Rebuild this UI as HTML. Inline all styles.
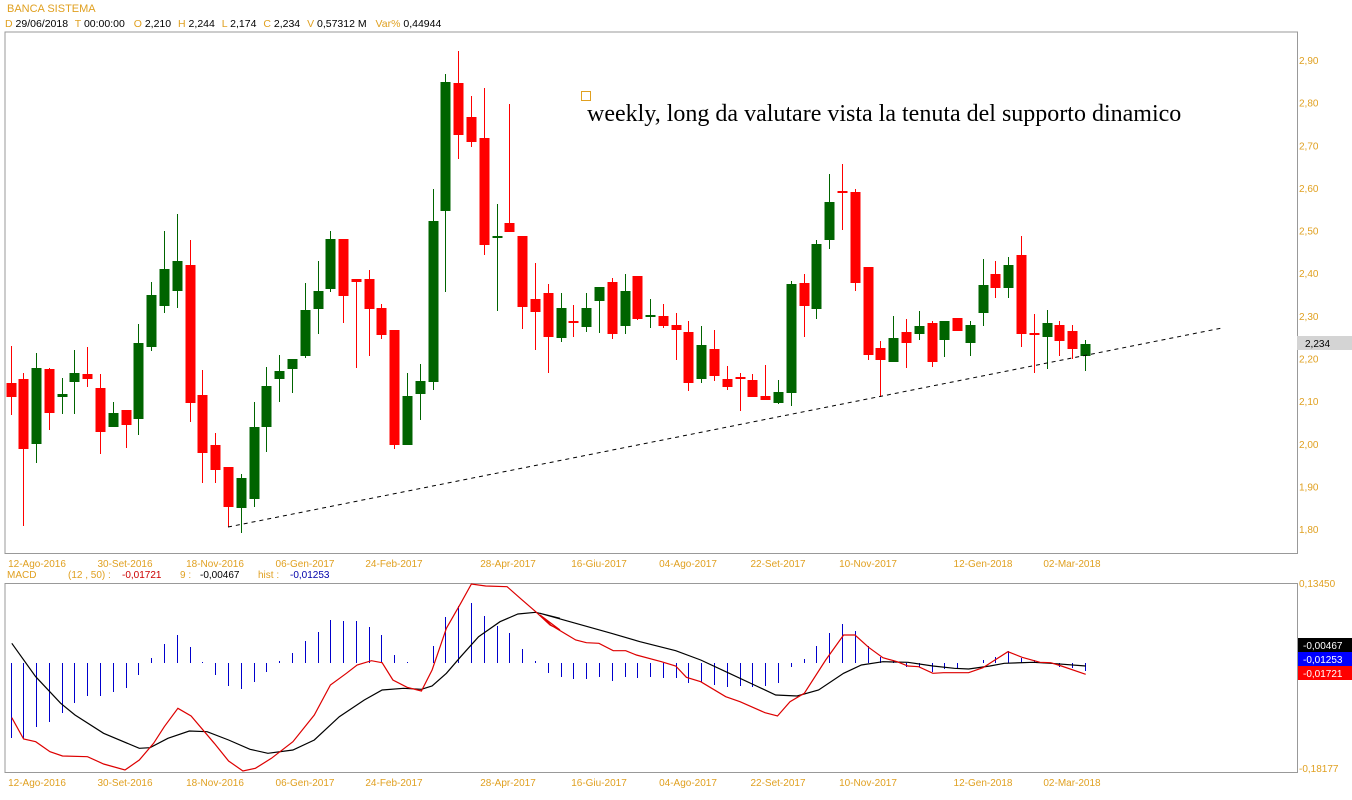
<!DOCTYPE html>
<html><head><meta charset="utf-8">
<style>
html,body{margin:0;padding:0;background:#fff;width:1352px;height:800px;overflow:hidden}
svg{display:block}
text{font-family:"Liberation Sans",Arial,sans-serif}
</style></head><body>
<svg id="s" width="1352" height="800" xmlns="http://www.w3.org/2000/svg">
<rect width="1352" height="800" fill="#fff"/>
<text x="7" y="12" font-size="11" fill="#e0a020">BANCA SISTEMA</text>
<text x="5" y="27" font-size="10.5" fill="#000"><tspan fill="#e0a020">D</tspan> 29/06/2018  <tspan fill="#e0a020" dx="4">T</tspan> 00:00:00 <tspan fill="#e0a020" dx="6">O</tspan> 2,210 <tspan fill="#e0a020" dx="4">H</tspan> 2,244 <tspan fill="#e0a020" dx="4">L</tspan> 2,174 <tspan fill="#e0a020" dx="4">C</tspan> 2,234 <tspan fill="#e0a020" dx="4">V</tspan> 0,57312 M <tspan fill="#e0a020" dx="6">Var%</tspan> 0,44944</text>
<path d="M5 32 H1297.5 V553.5 H5 Z" fill="none" stroke="#999" stroke-width="1"/>
<path d="M5 583.5 H1297.5 V772.5 H5 Z" fill="none" stroke="#999" stroke-width="1"/>
<g id="main"></g>
<line x1="228" y1="527" x2="1222" y2="328" stroke="#000" stroke-width="1" stroke-dasharray="4,4"/>
<rect x="581.5" y="91.5" width="9" height="9" fill="none" stroke="#e0a020"/>
<text x="587" y="121" font-size="24" fill="#000" style="font-family:'Liberation Serif',serif">weekly, long da valutare vista la tenuta del supporto dinamico</text>
<g id="axis" font-size="10" fill="#e0a020"></g>
<rect x="1297" y="336" width="55" height="14" fill="#d4d4d4"/>
<text x="1305" y="347" font-size="10" fill="#000">2,234</text>
<text x="7" y="578" font-size="10" fill="#e0a020">MACD</text>
<text x="68" y="578" font-size="10" fill="#e0a020">(12 , 50) :</text>
<text x="122" y="578" font-size="10" fill="#cc0000">-0,01721</text>
<text x="180" y="578" font-size="10" fill="#e0a020">9 :</text>
<text x="200" y="578" font-size="10" fill="#000">-0,00467</text>
<text x="258" y="578" font-size="10" fill="#e0a020">hist :</text>
<text x="290" y="578" font-size="10" fill="#0000aa">-0,01253</text>
<g id="macd"></g>
<text x="1299" y="587" font-size="10" fill="#e0a020">0,13450</text>
<text x="1299" y="772" font-size="10" fill="#e0a020">-0,18177</text>
<rect x="1298" y="638" width="54" height="14" fill="#000"/>
<text x="1303" y="649" font-size="10" fill="#fff">-0,00467</text>
<rect x="1298" y="652" width="54" height="14" fill="#0000ff"/>
<text x="1303" y="663" font-size="10" fill="#fff">-0,01253</text>
<rect x="1298" y="666" width="54" height="14" fill="#ff0000"/>
<text x="1303" y="677" font-size="10" fill="#fff">-0,01721</text>
</svg>
<script>
var NS="http://www.w3.org/2000/svg";
function el(p,t,a,txt){var e=document.createElementNS(NS,t);for(var k in a)e.setAttribute(k,a[k]);if(txt)e.textContent=txt;p.appendChild(e);return e;}
var main=document.getElementById("main"),axis=document.getElementById("axis"),macd=document.getElementById("macd");
var C=[[11,346,383,397,415,'r'],[23,373,379,449,526,'r'],[36,353,368,444,463,'g'],[49,368,369,413,430,'r'],[62,378,394,397,414,'g'],[74,350,373,382,414,'g'],[87,347,374,379,387,'r'],[100,374,388,432,454,'r'],[113,402,413,427,427,'g'],[126,410,410,425,448,'r'],[138,324,343,419,435,'g'],[151,282,295,347,351,'g'],[164,231,269,306,313,'g'],[177,214,261,291,308,'g'],[190,240,265,403,422,'r'],[202,370,395,453,483,'r'],[215,433,445,470,483,'r'],[228,467,467,507,527,'r'],[241,474,478,508,533,'g'],[254,402,427,499,507,'g'],[266,367,386,427,452,'g'],
[279,355,371,379,402,'g'],[292,359,359,369,393,'g'],[305,283,310,356,358,'g'],[318,261,291,309,334,'g'],[330,231,239,289,292,'g'],[343,239,239,296,323,'r'],[356,279,279,282,368,'r'],[369,270,279,309,356,'r'],[381,304,308,335,339,'r'],[394,330,330,445,449,'r'],[407,373,396,445,445,'g'],[420,364,381,394,420,'g'],[433,189,221,382,390,'g'],[445,74,82,211,292,'g'],[458,51,83,135,159,'r'],[471,96,117,142,147,'r'],[484,88,138,245,255,'r'],[497,204,236,237,311,'g'],[509,104,223,232,232,'r'],[522,236,236,307,329,'r'],[535,263,299,312,350,'r'],[548,284,293,337,373,'r'],
[561,293,308,338,342,'g'],[573,305,321,322,337,'r'],[586,293,308,327,332,'g'],[599,287,287,301,333,'g'],[612,278,282,334,339,'r'],[625,274,291,326,334,'g'],[637,276,276,319,320,'r'],[650,299,315,317,328,'g'],[663,304,316,326,328,'r'],[676,313,325,330,360,'r'],[688,321,332,383,391,'r'],[701,326,345,379,383,'g'],[714,330,349,376,381,'r'],[727,366,379,387,390,'r'],[740,373,377,378,411,'r'],[752,374,380,397,397,'r'],[765,365,396,400,400,'r'],[778,380,392,403,404,'g'],[791,281,284,393,406,'g'],[804,274,283,306,337,'r'],[816,240,244,309,319,'g'],
[829,174,202,240,249,'g'],[842,164,191,193,230,'r'],[855,189,192,283,291,'r'],[868,267,267,355,360,'r'],[880,341,348,360,397,'r'],[893,316,338,362,362,'g'],[906,319,332,343,368,'r'],[919,311,326,334,340,'g'],[932,321,323,362,367,'r'],[944,321,321,340,357,'g'],[957,318,318,331,331,'r'],[970,321,325,343,356,'g'],[983,259,285,313,326,'g'],[995,261,274,288,298,'r'],[1008,257,265,288,298,'g'],[1021,236,255,334,347,'r'],[1034,314,333,334,373,'r'],[1047,310,323,337,369,'g'],[1059,321,325,341,356,'r'],[1072,325,331,349,359,'r'],[1085,340,344,356,371,'g']];
C.forEach(function(c){var col=c[5]=='r'?'#ff0000':'#006400';
el(main,'line',{x1:c[0]+.5,x2:c[0]+.5,y1:c[1],y2:c[4],stroke:col,'stroke-width':1});
el(main,'rect',{x:c[0]-4.5,y:c[2],width:10,height:Math.max(2,c[3]-c[2]),fill:col});});
for(var i=0;i<=11;i++){var p=2.9-i*0.1,y=61+i*42.64;el(axis,'text',{x:1299,y:y+3},p.toFixed(2).replace('.',','));}
var D=[[37,'12-Ago-2016'],[125,'30-Set-2016'],[215,'18-Nov-2016'],[305,'06-Gen-2017'],[394,'24-Feb-2017'],[508,'28-Apr-2017'],[599,'16-Giu-2017'],[688,'04-Ago-2017'],[778,'22-Set-2017'],[868,'10-Nov-2017'],[983,'12-Gen-2018'],[1072,'02-Mar-2018']];
D.forEach(function(d){el(axis,'text',{x:d[0],y:567,'text-anchor':'middle'},d[1]);el(axis,'text',{x:d[0],y:786,'text-anchor':'middle'},d[1]);});
var H=[738,739,727,722,713,703,696,696,692,688,675,658,644,635,647,662,675,686,689,682,672,661,653,641,632,620,621,621,627,635,655,662,663,646,617,606,603,616,626,633,649,661,673,677,679,679,677,681,677,678,677,678,678,683,682,685,687,686,687,686,683,667,659,646,633,624,631,646,657,660,667,667,672,669,668,663,660,657,651,658,660,663,667,668,671];
H.forEach(function(v,i){var x=C[i][0]+.5;el(macd,'line',{x1:x,x2:x,y1:663,y2:v,stroke:'#0000cc','stroke-width':1});});
function pts(a,off){return a.map(function(p){return (off+p[0]/2.8).toFixed(1)+','+(560+p[1]/3).toFixed(1);}).join(' ');}
var B1=[[33,250],[100,350],[170,430],[210,465],[290,520],[390,565],[420,563],[470,535],[530,513],[580,515],[640,540],[700,568],[750,580],[820,570],[880,540],[950,470],[1020,420],[1070,390],[1130,385],[1180,388],[1210,378],[1250,340],[1290,290],[1340,230],[1400,185],[1450,162],[1500,157],[1568,175]];
var B2=[[0,160],[100,190],[200,220],[280,245],[380,272],[450,300],[530,340],[600,375],[660,405],[720,408],[780,390],[850,340],[900,315],[960,305],[1030,307],[1100,318],[1160,325],[1200,327],[1260,318],[1300,310],[1380,307],[1430,310],[1528,318]];
var R1=[[33,473],[66,537],[100,545],[140,575],[175,588],[245,590],[290,612],[350,630],[390,600],[430,550],[460,500],[498,445],[535,468],[600,550],[640,603],[680,633],[715,625],[760,595],[820,545],[880,465],[925,375],[970,340],[1000,315],[1040,302],[1070,308],[1100,360],[1140,382],[1180,393],[1210,330],[1250,205],[1290,130],[1320,72],[1360,78],[1420,80],[1460,118],[1500,155],[1540,195],[1568,210]];
var R2=[[0,165],[30,195],[100,240],[130,248],[165,250],[205,272],[240,272],[270,285],[340,305],[380,318],[410,352],[450,365],[520,410],[560,425],[630,458],[665,468],[700,425],[740,400],[800,300],[850,225],[882,225],[920,262],[960,293],[1000,305],[1030,318],[1060,320],[1100,340],[1130,338],[1200,338],[1240,323],[1310,275],[1350,292],[1400,307],[1430,308],[1460,318],[1528,343]];
el(macd,'polyline',{points:pts(B1,0)+' '+pts(B2,540),fill:'none',stroke:'#000','stroke-width':1.2});
el(macd,'polyline',{points:pts(R1,0)+' '+pts(R2,540),fill:'none',stroke:'#dd0000','stroke-width':1.2});
</script>
</body></html>
